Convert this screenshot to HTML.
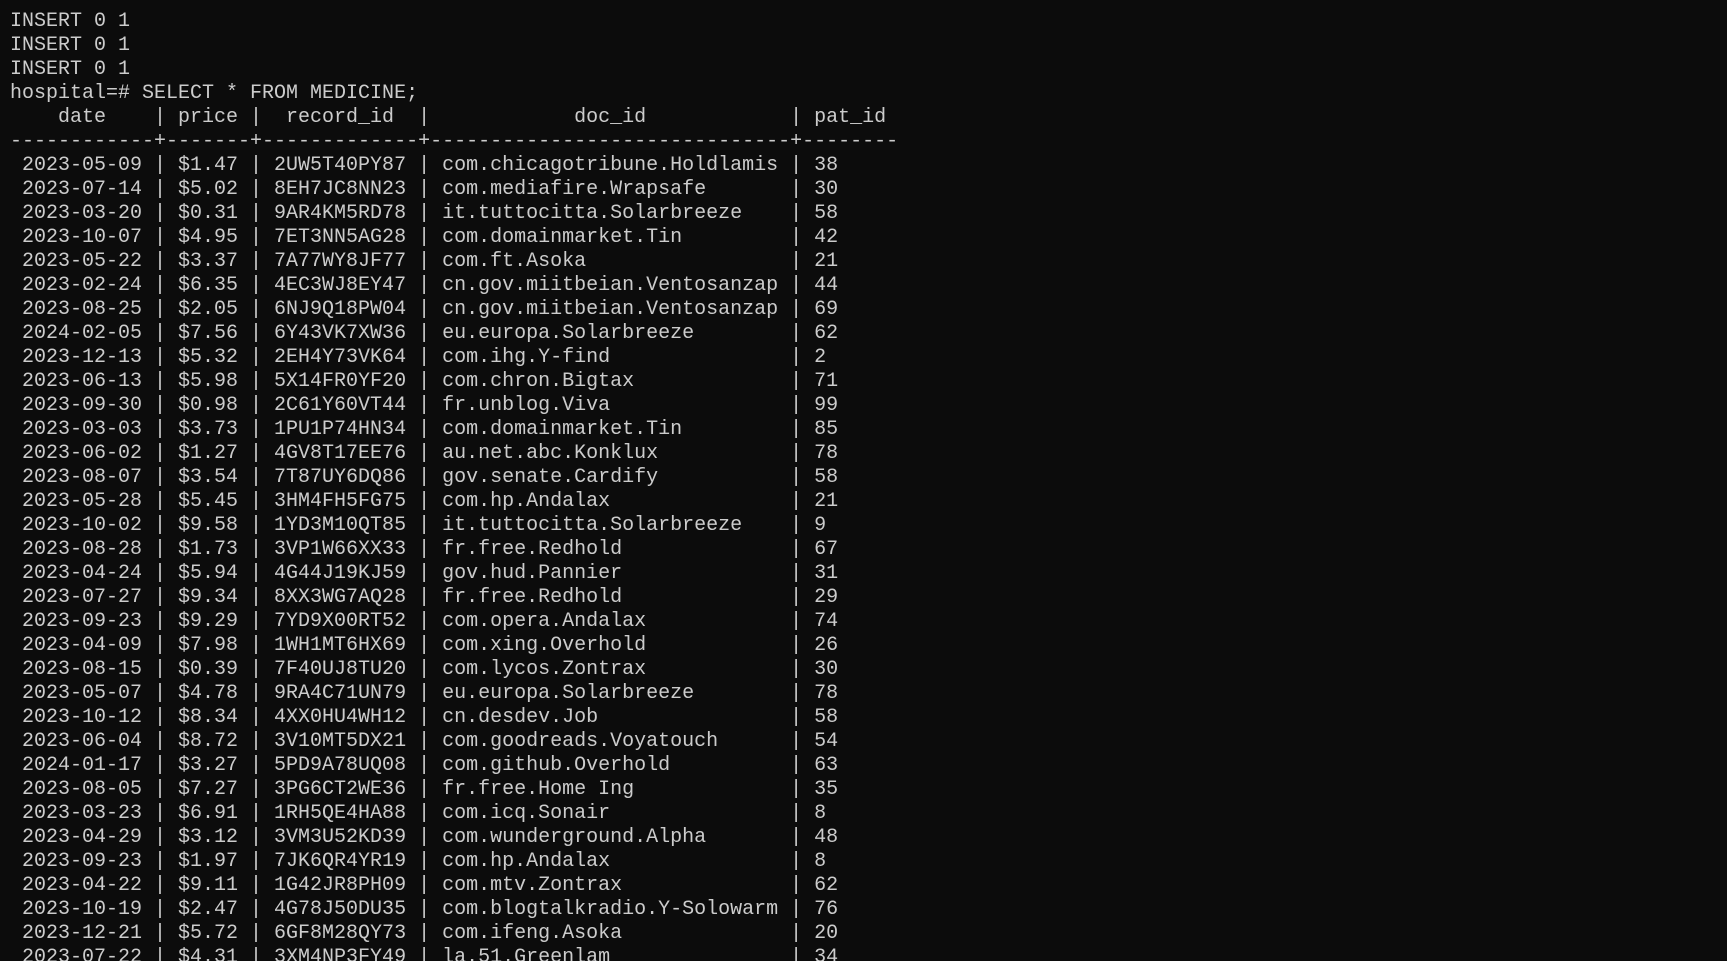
<!DOCTYPE html>
<html><head><meta charset="utf-8"><style>
html,body{margin:0;padding:0;background:#0c0c0c;width:1727px;height:961px;overflow:hidden}
pre{margin:0;padding:10px 0 0 10px;font-family:"Liberation Mono",monospace;font-size:20px;line-height:24px;color:#cccccc}
</style></head><body><pre>INSERT 0 1
INSERT 0 1
INSERT 0 1
hospital=# SELECT * FROM MEDICINE;
    date    | price |  record_id  |            doc_id            | pat_id
------------+-------+-------------+------------------------------+--------
 2023-05-09 | $1.47 | 2UW5T40PY87 | com.chicagotribune.Holdlamis | 38
 2023-07-14 | $5.02 | 8EH7JC8NN23 | com.mediafire.Wrapsafe       | 30
 2023-03-20 | $0.31 | 9AR4KM5RD78 | it.tuttocitta.Solarbreeze    | 58
 2023-10-07 | $4.95 | 7ET3NN5AG28 | com.domainmarket.Tin         | 42
 2023-05-22 | $3.37 | 7A77WY8JF77 | com.ft.Asoka                 | 21
 2023-02-24 | $6.35 | 4EC3WJ8EY47 | cn.gov.miitbeian.Ventosanzap | 44
 2023-08-25 | $2.05 | 6NJ9Q18PW04 | cn.gov.miitbeian.Ventosanzap | 69
 2024-02-05 | $7.56 | 6Y43VK7XW36 | eu.europa.Solarbreeze        | 62
 2023-12-13 | $5.32 | 2EH4Y73VK64 | com.ihg.Y-find               | 2
 2023-06-13 | $5.98 | 5X14FR0YF20 | com.chron.Bigtax             | 71
 2023-09-30 | $0.98 | 2C61Y60VT44 | fr.unblog.Viva               | 99
 2023-03-03 | $3.73 | 1PU1P74HN34 | com.domainmarket.Tin         | 85
 2023-06-02 | $1.27 | 4GV8T17EE76 | au.net.abc.Konklux           | 78
 2023-08-07 | $3.54 | 7T87UY6DQ86 | gov.senate.Cardify           | 58
 2023-05-28 | $5.45 | 3HM4FH5FG75 | com.hp.Andalax               | 21
 2023-10-02 | $9.58 | 1YD3M10QT85 | it.tuttocitta.Solarbreeze    | 9
 2023-08-28 | $1.73 | 3VP1W66XX33 | fr.free.Redhold              | 67
 2023-04-24 | $5.94 | 4G44J19KJ59 | gov.hud.Pannier              | 31
 2023-07-27 | $9.34 | 8XX3WG7AQ28 | fr.free.Redhold              | 29
 2023-09-23 | $9.29 | 7YD9X00RT52 | com.opera.Andalax            | 74
 2023-04-09 | $7.98 | 1WH1MT6HX69 | com.xing.Overhold            | 26
 2023-08-15 | $0.39 | 7F40UJ8TU20 | com.lycos.Zontrax            | 30
 2023-05-07 | $4.78 | 9RA4C71UN79 | eu.europa.Solarbreeze        | 78
 2023-10-12 | $8.34 | 4XX0HU4WH12 | cn.desdev.Job                | 58
 2023-06-04 | $8.72 | 3V10MT5DX21 | com.goodreads.Voyatouch      | 54
 2024-01-17 | $3.27 | 5PD9A78UQ08 | com.github.Overhold          | 63
 2023-08-05 | $7.27 | 3PG6CT2WE36 | fr.free.Home Ing             | 35
 2023-03-23 | $6.91 | 1RH5QE4HA88 | com.icq.Sonair               | 8
 2023-04-29 | $3.12 | 3VM3U52KD39 | com.wunderground.Alpha       | 48
 2023-09-23 | $1.97 | 7JK6QR4YR19 | com.hp.Andalax               | 8
 2023-04-22 | $9.11 | 1G42JR8PH09 | com.mtv.Zontrax              | 62
 2023-10-19 | $2.47 | 4G78J50DU35 | com.blogtalkradio.Y-Solowarm | 76
 2023-12-21 | $5.72 | 6GF8M28QY73 | com.ifeng.Asoka              | 20
 2023-07-22 | $4.31 | 3XM4NP3FY49 | la.51.Greenlam               | 34
</pre></body></html>
